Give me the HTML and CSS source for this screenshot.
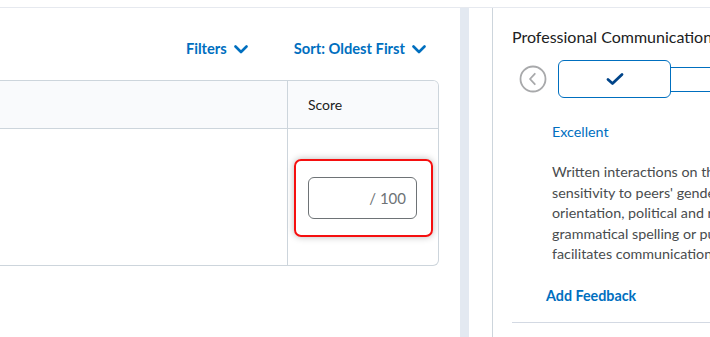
FILE: index.html
```html
<!DOCTYPE html>
<html>
<head>
<meta charset="utf-8">
<link rel="stylesheet" href="styles.css">
</head>
<body>
<div class="page">
  <div class="main">
    <div class="toolbar">
      <button class="menu-btn">Filters <svg class="chev" viewBox="0 0 14 9" width="14" height="9"><path d="M1.5 1.5 L7 7 L12.5 1.5" fill="none" stroke="#006fbf" stroke-width="2.6" stroke-linecap="round" stroke-linejoin="round"/></svg></button>
      <button class="menu-btn">Sort: Oldest First <svg class="chev" viewBox="0 0 14 9" width="14" height="9"><path d="M1.5 1.5 L7 7 L12.5 1.5" fill="none" stroke="#006fbf" stroke-width="2.6" stroke-linecap="round" stroke-linejoin="round"/></svg></button>
    </div>
    <div class="table">
      <div class="row head">
        <div class="cell name"></div>
        <div class="cell score">Score</div>
      </div>
      <div class="row body">
        <div class="cell name"></div>
        <div class="cell score">
          <div class="highlight">
            <div class="score-input"><span>/ 100</span></div>
          </div>
        </div>
      </div>
    </div>
  </div>
  <div class="gutter"></div>
  <div class="spacer"></div>
  <div class="side">
    <div class="side-title">Professional Communication</div>
    <div class="levels">
      <svg class="prev" viewBox="0 0 28 28" width="28" height="28"><circle cx="14" cy="14" r="12.5" fill="none" stroke="#a8a9ab" stroke-width="1.8"/><path d="M15.8 8.8 L11 14 L15.8 19.2" fill="none" stroke="#a8a9ab" stroke-width="1.8" stroke-linecap="round" stroke-linejoin="round"/></svg>
      <div class="level selected"><svg viewBox="0 0 18 14" width="18" height="14"><path d="M2 7.5 L6.5 11.5 L16 2.5" fill="none" stroke="#004489" stroke-width="2.8" stroke-linecap="round" stroke-linejoin="round"/></svg></div>
      <div class="level next"></div>
    </div>
    <div class="level-name">Excellent</div>
    <p class="desc">Written interactions on the discussion board show respect and<br>sensitivity to peers' gender, cultural and linguistic background, sexual<br>orientation, political and religious beliefs. Little to no<br>grammatical spelling or punctuation errors are made. The writing<br>facilitates communication.</p>
    <button class="feedback">Add Feedback</button>
    <div class="rule"></div>
  </div>
</div>
</body>
</html>
```

FILE: styles.css
```css
* { box-sizing: border-box; }
html, body { margin: 0; padding: 0; background: #fff; }
body {
  font-family: Lato, "Open Sans", sans-serif;
  color: #202122;
  padding-top: 7px;
  overflow: hidden;
}
.page {
  display: flex;
  height: 330px;
  border-top: 1px solid #e6e9ef;
  overflow: hidden;
}
.main {
  width: 460px;
  flex: none;
}
.toolbar {
  display: flex;
  justify-content: flex-end;
  gap: 46px;
  padding: 30px 34px 22px 0;
  height: 72px;
}
.menu-btn {
  display: flex;
  align-items: center;
  gap: 7px;
  border: 0;
  background: none;
  padding: 0;
  font-family: Lato, sans-serif;
  font-weight: 700;
  font-size: 14.7px;
  line-height: 20px;
  color: #006fbf;
}
.chev { margin-top: 2px; }
.table {
  width: 439px;
  border: 1px solid #cdd5dc;
  border-left: 0;
  border-radius: 0 6px 6px 0;
  overflow: hidden;
}
.row { display: flex; }
.row.head {
  height: 48px;
  background: #f9fafc;
  border-bottom: 1px solid #cdd5dc;
}
.row.body { height: 136px; }
.cell.name {
  width: 288px;
  border-right: 1px solid #cdd5dc;
}
.cell.score {
  flex: 1;
  display: flex;
  align-items: center;
}
.head .cell.score {
  padding-left: 20px;
  font-size: 14px;
  color: #202122;
}
.body .cell.score { padding-left: 6px; }
.highlight {
  width: 139px;
  height: 78px;
  border: 2px solid #f50f0f;
  border-radius: 7px;
  box-shadow: 0 0 7px rgba(0, 0, 0, 0.28);
  padding: 16px 14px 16px 12px;
  margin-top: 1px;
}
.score-input {
  height: 42px;
  border: 1px solid #6e7376;
  border-radius: 6px;
  display: flex;
  align-items: center;
  justify-content: flex-end;
  padding-right: 10px;
  font-size: 15px;
  color: #6e7376;
}
.gutter {
  width: 9px;
  flex: none;
  background: #e3e9f1;
}
.spacer {
  width: 24px;
  flex: none;
  border-right: 1px solid #cdd5dc;
}
.side {
  flex: none;
  width: 300px;
  padding: 19px 0 0 19px;
}
.side-title {
  font-size: 16px;
  line-height: 20px;
  white-space: nowrap;
  color: #202122;
}
.levels {
  display: flex;
  align-items: center;
  margin-top: 13px;
  height: 38px;
}
.prev { margin-left: 7px; flex: none; }
.level {
  flex: none;
  border: 1px solid #006fbf;
  display: flex;
  align-items: center;
  justify-content: center;
}
.level.selected {
  width: 113px;
  height: 38px;
  margin-left: 11px;
  border-radius: 6px;
  border-width: 1.3px;
  position: relative;
  z-index: 1;
  background: #fff;
}
.level.next {
  width: 120px;
  height: 25px;
  margin-left: -2px;
  border-right: 0;
}
.level-name {
  margin: 24px 0 0 40px;
  font-size: 14.3px;
  line-height: 20px;
  color: #006fbf;
}
.desc {
  margin: 20px 0 0 40px;
  font-size: 14.3px;
  line-height: 20.5px;
  color: #494c4e;
  white-space: nowrap;
}
.feedback {
  display: block;
  margin: 21px 0 0 34px;
  border: 0;
  background: none;
  padding: 0;
  font-family: Lato, sans-serif;
  font-weight: 700;
  font-size: 14.3px;
  line-height: 20px;
  color: #006fbf;
}
.rule {
  margin-top: 16px;
  height: 1px;
  background: #d3d9e3;
}
```
